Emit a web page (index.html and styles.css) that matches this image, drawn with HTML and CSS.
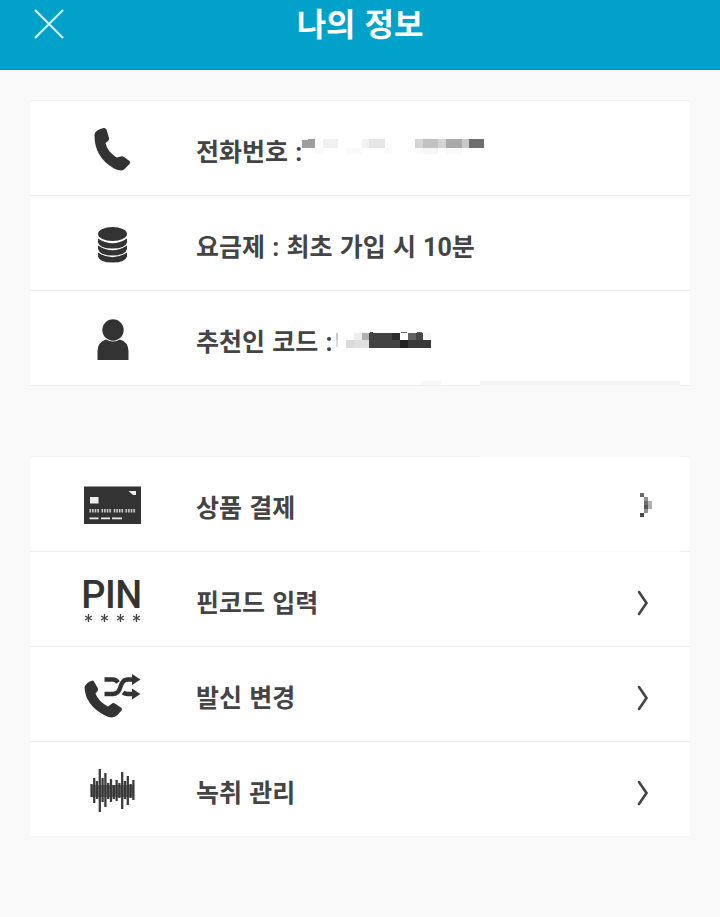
FILE: index.html
```html
<!DOCTYPE html>
<html lang="ko">
<head>
    <meta charset="UTF-8">
    <meta name="viewport" content="width=device-width, initial-scale=1.0">
    <title>나의 정보</title>
    <link rel="stylesheet" href="styles.css">
</head>
<body>
    <header class="header">
        <svg class="close" width="32" height="32" viewBox="0 0 32 32"><path d="M2 2L30 30M30 2L2 30"/></svg>
        <h1>나의 정보</h1>
    </header>

    <div class="card">
        <div class="row">
            <div class="icon">
                <svg width="60" height="60" viewBox="0 0 60 60">
                    <path d="M12.500 16.500Q13 12 21.500 10Q23.500 9.500 24.500 11.500L27 20Q27.500 22 26 23L23.500 25Q25 33 34.500 39.500L39 38.500Q40.500 38 42 39L47.500 43Q49 44.500 47.500 46L42 51.500Q39 54 32 50.500Q12 39 12.500 16.500Z"/>
                </svg>
            </div>
            <span class="label">전화번호 :</span>
            <svg class="mosaic phone-mask" width="183" height="16" viewBox="0 0 183 16" shape-rendering="crispEdges">
                <path fill="#9d9d9d" d="M0 1h6V0h7v9H0z"/>
                <path fill="#f1f1f1" d="M21 0h15v9H21zM60 0h7v9h-7z"/>
                <path fill="#e5e5e5" d="M67 0h16v9H67z"/>
                <path fill="#d4d4d4" d="M113 0h8v9h-8zM136 0h8v9h-8z"/>
                <path fill="#c2c2c2" d="M121 0h15v9h-15z"/>
                <path fill="#a9a9a9" d="M144 0h16v9h-16z"/>
                <path fill="#c9c9c9" d="M160 0h7v9h-7z"/>
                <path fill="#6d6d6d" d="M167 0h15v9h-15z"/>
                <path fill="#fafafa" d="M13 9h8v6h-8zM44 9h16v6H44zM83 9h7v6h-7zM113 9h8v6h-8zM144 9h16v6h-16z"/>
                <path fill="#f5f5f5" d="M121 9h15v6h-15z"/>
            </svg>
        </div>
        <div class="row">
            <div class="icon">
                <svg width="60" height="60" viewBox="0 0 60 60">
                    <ellipse cx="30.500" cy="21" rx="14.500" ry="7"/>
                    <path d="M16 25.500Q30.500 35 45 25.500V29.500Q43.500 35.500 30.500 35.500T16 29.500Z"/>
                    <path d="M16 32.500Q30.500 42 45 32.500V36Q43.500 42.500 30.500 42.500T16 36Z"/>
                    <path d="M16 39.500Q30.500 49 45 39.500V43.500Q43.500 49.500 30.500 49.500T16 43.500Z"/>
                </svg>
            </div>
            <span class="label">요금제 : 최초 가입 시 10분</span>
        </div>
        <div class="row">
            <div class="icon">
                <svg width="60" height="60" viewBox="0 0 60 60">
                    <circle cx="31" cy="22" r="10.700"/>
                    <path d="M15.500 52V43.500Q15.500 34 24 31.500Q31 35.500 38 31.500Q46.500 34 46.500 43.500V52Z"/>
                </svg>
            </div>
            <span class="label">추천인 코드 :</span>
            <svg class="mosaic code-mask" width="95" height="16" viewBox="0 0 95 16" shape-rendering="crispEdges">
                <path fill="#c9c9c9" d="M0 1h2v7H0z"/>
                <path fill="#e0e0e0" d="M0 8h2v7H0zM18 8h15v8H18z"/>
                <path fill="#ededed" d="M18 1h8v7h-8z"/>
                <path fill="#b0b0b0" d="M26 1h7v7h-7z"/>
                <path fill="#dadada" d="M10 8h8v8h-8z"/>
                <path fill="#424242" d="M33 1h23v7h8v8H33zM34 0h3v1h-3z"/>
                <path fill="#2e2e2e" d="M56 1h8v7h-8z"/>
                <path fill="#636363" d="M72 1h8v7h-8zM65 0h6v1h-6zM81 0h5v1h-5z"/>
                <path fill="#464646" d="M80 1h7v7h-7z"/>
                <path fill="#f7f7f7" d="M87 1h8v7h-8z"/>
                <path fill="#232323" d="M64 8h8v8h-8z"/>
                <path fill="#383838" d="M72 8h23v8H72z"/>
            </svg>
        </div>
        <div class="smudge smudge-small"></div>
        <div class="smudge smudge-wide"></div>
    </div>

    <div class="card card-menu">
        <div class="row">
            <div class="icon">
                <svg width="60" height="60" viewBox="0 0 60 60">
                    <path d="M2 12.500h57V50H2z"/>
                    <path class="light" d="M8 23h8.500v6.500H8zM7.500 43.500h9v1.700h-9zM19 43.500h9v1.700h-9zM30 43.500h10v1.700H30zM46.500 17h7.500v4h-3z"/>
                    <path class="digits" d="M7.500 36.700h10.500M19.500 36.700h10.500M31.700 36.700h10.500M43.500 36.700h10.500"/>
                </svg>
            </div>
            <span class="label">상품 결제</span>
            <svg class="arrow mosaic-arrow" width="14" height="26" viewBox="0 0 14 26" shape-rendering="crispEdges">
                <path fill="#6b6b6b" d="M1 1h4v4H1z"/>
                <path fill="#8f8f8f" d="M5 5h4v4H5zM5 17h4v4H5z"/>
                <path fill="#707070" d="M5 9h4v4H5z"/>
                <path fill="#585858" d="M5 13h4v4H5z"/>
                <path fill="#b0b0b0" d="M9 9h4v8H9z"/>
                <path fill="#4a4a4a" d="M1 21h4v4H1z"/>
            </svg>
        </div>
        <div class="row">
            <div class="icon pin">
                <span class="pin-text">PIN</span>
                <svg width="60" height="12" viewBox="0 0 60 12">
                    <g class="star">
                        <path d="M6.500 2v8M3 4l7 4M10 4l-7 4"/>
                        <path d="M22.500 2v8M19 4l7 4M26 4l-7 4"/>
                        <path d="M38.500 2v8M35 4l7 4M42 4l-7 4"/>
                        <path d="M54.500 2v8M51 4l7 4M58 4l-7 4"/>
                    </g>
                </svg>
            </div>
            <span class="label">핀코드 입력</span>
            <svg class="arrow" width="14" height="26" viewBox="0 0 14 26"><path d="M2 2L9.500 13L2 24"/></svg>
        </div>
        <div class="row">
            <div class="icon">
                <svg width="60" height="60" viewBox="0 0 60 60">
                    <path d="M2.500 23Q4.500 18 10.500 16.500Q11.500 16.500 12 17.500L16 24.500Q16.500 26 15.500 27L13.500 29.500Q16 37 26 42.500L30 39.500Q31.500 38.500 33 39.500L39.500 44Q40.500 45 39.500 46.500L35.500 51Q31 55.500 23 51.500Q3 41 2.500 23Z"/>
                    <path class="shuffle" d="M22.500 15.500H31Q34 15.500 36 18.500M22.500 30H31C41 30 36 15.500 46 15.500H51M41 28.500Q43 30 46 30H51"/>
                    <path d="M50 10L58.500 15.500L50 21ZM50 24.500L58.500 30L50 35.500Z"/>
                </svg>
            </div>
            <span class="label">발신 변경</span>
            <svg class="arrow" width="14" height="26" viewBox="0 0 14 26"><path d="M2 2L9.500 13L2 24"/></svg>
        </div>
        <div class="row">
            <div class="icon">
                <svg width="60" height="60" viewBox="0 0 60 60">
                    <path class="wave" d="M9.500 25v13M12.200 19v25M15 22v18M17.800 10v43M20.600 19v24M23.400 14v34M26.200 24v16M29 20v23M31.800 26v14M34.600 21v21M37.400 24v15M40.200 13v37M43 22v18M45.800 17v29M48.600 25v14M51.400 21v20"/>
                    <path d="M9 26h43v12H9z" fill-opacity="0.6"/>
                </svg>
            </div>
            <span class="label">녹취 관리</span>
            <svg class="arrow" width="14" height="26" viewBox="0 0 14 26"><path d="M2 2L9.500 13L2 24"/></svg>
        </div>
        <div class="smudge smudge-top"></div>
        <div class="smudge smudge-line"></div>
    </div>
</body>
</html>
```
FILE: styles.css
```css
* {
    box-sizing: border-box;
}
body {
    margin: 0;
    min-height: 917px;
    background-color: #f9f9f9;
    font-family: Roboto, "Noto Sans CJK KR", sans-serif;
    color: #444;
}
.header {
    position: relative;
    display: flex;
    justify-content: center;
    height: 70px;
    background-color: #02a1ca;
    border-bottom: 1px solid #1590b4;
}
.header h1 {
    margin: 0;
    font-size: 32px;
    line-height: 50px;
    font-weight: 700;
    word-spacing: 1px;
    color: #fff;
}
.close {
    position: absolute;
    left: 33px;
    top: 8px;
    fill: none;
    stroke: #d8f8ff;
    stroke-width: 2;
}
.card {
    position: relative;
    margin: 30px 30px 0;
    background-color: #fff;
    border-top: 1px solid #f0f0f0;
    border-radius: 3px;
}
.card-menu {
    margin-top: 70px;
}
.row {
    position: relative;
    display: flex;
    align-items: center;
    height: 95px;
    border-bottom: 1px solid #eee;
}
.card-menu .row:nth-child(4) {
    border-bottom-color: #f6f6f6;
}
.icon {
    width: 166px;
    padding-right: 3px;
    display: flex;
    justify-content: center;
    fill: #333;
}
.label {
    flex: 1;
    padding-top: 9px;
    font-size: 25px;
    line-height: 36px;
    font-weight: 700;
    word-spacing: 1px;
    white-space: nowrap;
}
.arrow {
    margin: 7px 39px 0 0;
    fill: none;
    stroke: #444;
    stroke-width: 2.6;
    stroke-linecap: round;
}
.mosaic-arrow {
    margin: 2px 37px 0 0;
    stroke: none;
}

/* icon details */
.light {
    fill: #eee;
}
.digits {
    fill: none;
    stroke: #ccc;
    stroke-width: 3.5;
    stroke-dasharray: 1.6 1;
}
.pin {
    flex-direction: column;
    align-items: center;
    padding-top: 4px;
}
.pin-text {
    font-size: 38px;
    line-height: 34px;
    font-weight: 500;
    letter-spacing: -0.5px;
    color: #333;
}
.star {
    stroke: #444;
    stroke-width: 1.3;
}
.shuffle {
    fill: none;
    stroke: #333;
    stroke-width: 4.4;
}
.wave {
    stroke: #3c3c3c;
    stroke-width: 2.3;
}

/* masked private values */
.mosaic {
    position: absolute;
}
.phone-mask {
    left: 272px;
    top: 38px;
}
.code-mask {
    left: 306px;
    top: 41px;
}
.smudge {
    position: absolute;
    left: 450px;
    width: 200px;
}
.smudge-small {
    left: 391px;
    width: 20px;
    height: 4px;
    bottom: 1px;
    background-color: #f6f6f6;
}
.smudge-wide {
    height: 5px;
    bottom: 0;
    background-color: #f9f9f9;
    border-top: 4px solid #f4f4f4;
}
.smudge-top {
    top: -1px;
    height: 1px;
    background-color: #fbfbfb;
}
.smudge-line {
    top: 94px;
    height: 1px;
    background-color: #fbfbfb;
}
```
